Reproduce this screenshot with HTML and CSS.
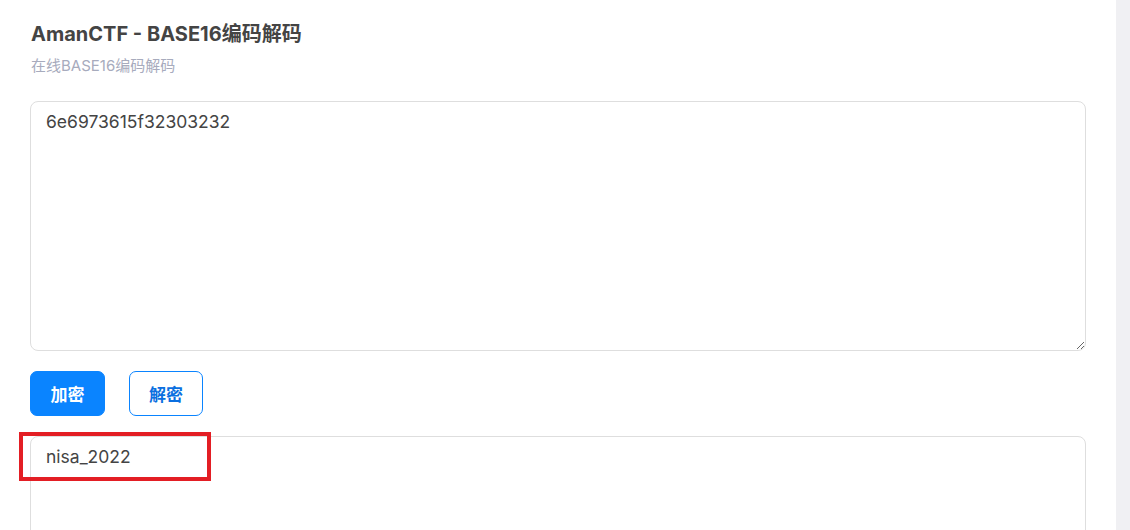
FILE: index.html
```html
<!DOCTYPE html>
<html lang="zh">
<head>
<meta charset="utf-8">
<title>AmanCTF - BASE16编码解码</title>
<link rel="stylesheet" href="styles.css">
</head>
<body>
<div class="page">
  <main class="main">
    <header class="head">
      <h1 class="title">AmanCTF - BASE16编码解码</h1>
      <p class="subtitle">在线BASE16编码解码</p>
    </header>
    <textarea class="box box-in">6e6973615f32303232</textarea>
    <div class="actions">
      <button class="btn btn-primary">加密</button>
      <button class="btn btn-outline">解密</button>
    </div>
    <div class="out-wrap">
      <textarea class="box box-out">nisa_2022</textarea>
      <div class="mark"></div>
    </div>
  </main>
  <div class="rail"></div>
</div>
</body>
</html>
```

FILE: styles.css
```css
* { box-sizing: border-box; }
html, body { margin: 0; padding: 0; height: 100%; overflow: hidden; }
body {
  font-family: Inter, "Noto Sans CJK SC", sans-serif;
  color: #444;
  background: #fff;
}
.page {
  display: flex;
  height: 530px;
  overflow: hidden;
}
.main {
  flex: 1;
  padding: 21px 30px 0 30px;
  display: flex;
  flex-direction: column;
  overflow: hidden;
}
.main > * { flex-shrink: 0; }
.rail {
  width: 14px;
  background: #f0f0f3;
}
.head { padding-left: 1px; }
.title {
  margin: 0;
  font-size: 20px;
  font-weight: 700;
  line-height: 26px;
  color: #444;
}
.subtitle {
  margin: 9px 0 0;
  font-size: 15px;
  line-height: 20px;
  color: #a7abbd;
}
.box {
  display: block;
  width: 1056px;
  border: 1px solid #dedede;
  border-radius: 8px;
  padding: 9px 15px;
  font-family: Inter, "Noto Sans CJK SC", sans-serif;
  font-size: 17.5px;
  line-height: 22px;
  color: #444;
  background: #fff;
  outline: none;
}
.box-in {
  margin-top: 25px;
  height: 250px;
  resize: vertical;
}
.actions {
  display: flex;
  gap: 24px;
  margin-top: 20px;
}
.btn {
  height: 45px;
  width: 75px;
  border-radius: 7px;
  font-family: "Noto Sans CJK SC", sans-serif;
  font-size: 17px;
  font-weight: 700;
  cursor: pointer;
}
.btn-primary {
  background: #0a84ff;
  color: #fff;
  border: 1px solid #0a84ff;
}
.btn-outline {
  width: 74px;
  background: #fff;
  color: #0a6fe0;
  border: 1px solid #0a84ff;
}
.out-wrap {
  position: relative;
  margin-top: 20px;
}
.box-out {
  height: 250px;
  resize: vertical;
}
.mark {
  position: absolute;
  left: -11px;
  top: -4px;
  width: 192px;
  height: 49px;
  border: 4px solid #e31e24;
  pointer-events: none;
}
```
